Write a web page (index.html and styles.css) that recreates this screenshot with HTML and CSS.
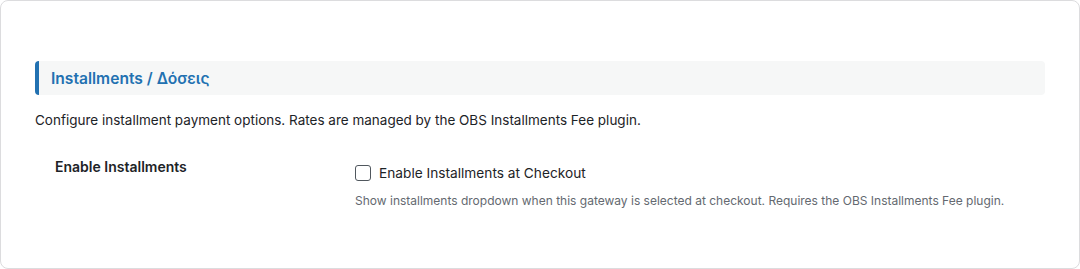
FILE: index.html
```html
<!DOCTYPE html>
<html lang="en">
<head>
    <meta charset="UTF-8">
    <meta name="viewport" content="width=device-width, initial-scale=1.0">
    <title>Installments Settings</title>
    <link rel="stylesheet" href="styles.css">
</head>
<body>
    <div class="card">
        <h3 class="section-title">Installments / Δόσεις</h3>
        <p class="section-desc">Configure installment payment options. Rates are managed by the OBS Installments Fee plugin.</p>

        <div class="form-row">
            <div class="form-label">Enable Installments</div>
            <div class="form-field">
                <label class="check">
                    <span class="box"></span>
                    Enable Installments at Checkout
                </label>
                <p class="field-desc">Show installments dropdown when this gateway is selected at checkout. Requires the OBS Installments Fee plugin.</p>
            </div>
        </div>
    </div>
</body>
</html>
```

FILE: styles.css
```css
body {
    font-family: Inter, "Noto Sans", Arial, sans-serif;
    margin: 0;
    padding: 0;
    background-color: #fff;
    color: #1d2327;
}
.card {
    box-sizing: border-box;
    height: 269px;
    border: 1px solid #dcdcde;
    border-radius: 8px;
    padding: 60px 34px 0 34px;
    background-color: #fff;
}
.section-title {
    margin: 0;
    height: 34px;
    box-sizing: border-box;
    display: flex;
    align-items: center;
    padding-left: 12px;
    background-color: #f6f7f7;
    border-left: 4px solid #2271b1;
    border-radius: 4px;
    color: #2271b1;
    font-size: 15.6px;
    font-weight: 600;
}
.section-desc {
    margin: 16px 0 0 0;
    font-size: 13.5px;
    line-height: 18px;
    color: #1d2327;
}
.form-row {
    display: flex;
    padding: 29px 0 0 20px;
}
.form-label {
    width: 300px;
    font-size: 14px;
    font-weight: 600;
    line-height: 18px;
}
.check {
    display: flex;
    align-items: center;
    gap: 8px;
    font-size: 13.7px;
    line-height: 18px;
    margin-top: 6px;
}
.box {
    width: 16px;
    height: 16px;
    box-sizing: border-box;
    border: 1px solid #50575e;
    border-radius: 3px;
}
.field-desc {
    margin: 11px 0 0 0;
    font-size: 12px;
    line-height: 16px;
    color: #646970;
}
```
